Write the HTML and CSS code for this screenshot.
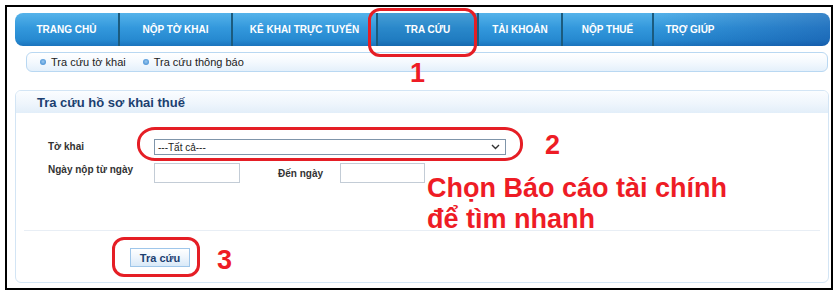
FILE: index.html
```html
<!DOCTYPE html>
<html lang="vi">
<head>
<meta charset="utf-8">
<title>Tra cứu hồ sơ khai thuế</title>
<link rel="stylesheet" href="styles.css">
</head>
<body>
<div class="page">
  <div class="frame">
    <nav class="topnav">
      <a class="tab tab-home">TRANG CHỦ</a>
      <a class="tab tab-submit">NỘP TỜ KHAI</a>
      <a class="tab tab-online">KÊ KHAI TRỰC TUYẾN</a>
      <a class="tab tab-search active">TRA CỨU</a>
      <a class="tab tab-account">TÀI KHOẢN</a>
      <a class="tab tab-tax">NỘP THUẾ</a>
      <a class="tab tab-help">TRỢ GIÚP</a>
    </nav>
    <div class="subnav">
      <span class="sublink"><i class="dot"></i>Tra cứu tờ khai</span>
      <span class="sublink"><i class="dot"></i>Tra cứu thông báo</span>
    </div>
    <section class="panel">
      <div class="panel-head"><h2 class="panel-title">Tra cứu hồ sơ khai thuế</h2></div>
      <div class="panel-body">
        <div class="row row-first">
          <label class="lbl">Tờ khai</label>
          <div class="select"><span class="select-text">---Tất cả---</span>
            <svg class="chev" width="9" height="6" viewBox="0 0 9 6"><path d="M1 1 L4.5 4.5 L8 1" fill="none" stroke="#333" stroke-width="1.4"/></svg>
          </div>
        </div>
        <div class="row row-second">
          <label class="lbl lbl-top">Ngày nộp từ ngày</label>
          <div class="input"></div>
          <label class="lbl lbl-to">Đến ngày</label>
          <div class="input input-to"></div>
        </div>
      </div>
      <div class="sep"></div>
      <div class="actions"><button class="btn">Tra cứu</button></div>
    </section>
  </div>

  <div class="oval oval-1"></div>
  <div class="oval oval-2"></div>
  <div class="oval oval-3"></div>
  <div class="num num-1">1</div>
  <div class="num num-2">2</div>
  <div class="num num-3">3</div>
  <div class="note">Chọn Báo cáo tài chính<br>để tìm nhanh</div>
</div>
</body>
</html>
```

FILE: styles.css
```css
html, body {
  margin: 0;
  padding: 0;
  background: #fff;
}
body {
  font-family: "Liberation Sans", Arial, sans-serif;
}
.page {
  position: relative;
  width: 836px;
  height: 293px;
  padding: 5px 0 0 5px;
  box-sizing: border-box;
  overflow: hidden;
}
.frame {
  width: 828px;
  height: 285px;
  box-sizing: border-box;
  border: 2px solid #000;
  padding: 6px 0 0 8px;
}

/* top navigation */
.topnav {
  display: flex;
  width: 815px;
  height: 33px;
  border-radius: 8px;
  overflow: hidden;
  background:
    linear-gradient(to right, rgba(10, 40, 130, 0) 78%, rgba(10, 50, 140, 0.35) 100%),
    linear-gradient(to bottom, #55b3ea 0%, #3398dc 45%, #2689d0 82%, #1b74bd 100%);
}
.tab {
  display: flex;
  align-items: center;
  justify-content: center;
  height: 100%;
  box-sizing: border-box;
  border-left: 2px solid #1b5b7e;
  color: #fff;
  font-size: 10px;
  font-weight: bold;
  white-space: nowrap;
}
.tab-home { width: 103px; border-left: none; }
.tab-submit { width: 113px; }
.tab-online { width: 145px; }
.tab-search { width: 101px; }
.tab-account { width: 84px; }
.tab-tax { width: 91px; }
.tab-help { width: 74px; }
.tab.active {
  background: rgba(0, 55, 110, 0.16);
}

/* sub navigation */
.subnav {
  display: flex;
  align-items: center;
  gap: 17px;
  margin: 6px 0 0 11px;
  width: 802px;
  height: 20px;
  box-sizing: border-box;
  padding-left: 13px;
  border: 1px solid #b9d8f2;
  border-radius: 6px;
  background: linear-gradient(to bottom, #ffffff 0%, #f4f9fe 50%, #e4f0fb 100%);
  font-size: 11px;
  color: #222;
}
.sublink {
  display: flex;
  align-items: center;
}
.dot {
  display: inline-block;
  width: 6px;
  height: 6px;
  border-radius: 50%;
  margin-right: 5px;
  background: radial-gradient(circle at 50% 45%, #9dc9ef 0%, #5d9fdc 55%, #3f86cc 100%);
}

/* panel */
.panel {
  margin-top: 18px;
  width: 814px;
  height: 193px;
  box-sizing: border-box;
  border: 1px solid #d3e5f5;
  border-radius: 6px;
}
.panel-head {
  height: 22px;
  display: flex;
  align-items: center;
  padding-left: 21px;
  border-radius: 5px 5px 0 0;
  background: linear-gradient(to bottom, #fbfdff 0%, #eef5fc 60%, #e2eef9 100%);
}
.panel-title {
  margin: 0;
  font-size: 13px;
  font-weight: bold;
  color: #1c3f70;
}
.panel-body {
  padding: 26px 0 0 32px;
}
.row {
  display: flex;
}
.row-first {
  align-items: center;
  height: 16px;
}
.row-second {
  margin-top: 8px;
  height: 20px;
}
.lbl {
  width: 106px;
  font-size: 10px;
  font-weight: bold;
  color: #333;
  line-height: 12px;
}
.lbl-top {
  align-self: flex-start;
  padding-top: 1px;
}
.lbl-to {
  width: 62px;
  margin-left: 38px;
  align-self: center;
  padding-top: 1px;
}
.select {
  display: flex;
  align-items: center;
  justify-content: space-between;
  width: 352px;
  height: 16px;
  box-sizing: border-box;
  border: 1px solid #7f95aa;
  padding: 0 5px 0 3px;
  background: #fff;
}
.select-text {
  font-size: 10px;
  color: #222;
}
.chev {
  display: block;
}
.input {
  width: 86px;
  height: 20px;
  box-sizing: border-box;
  border: 1px solid #c3ccd6;
  background: #fff;
}
.input-to {
  width: 85px;
}
.sep {
  margin: 47px 8px 0 8px;
  height: 1px;
  background: #e8eef5;
}
.actions {
  padding: 17px 0 0 114px;
}
.btn {
  display: block;
  width: 60px;
  height: 19px;
  padding: 0;
  border: 1px solid #9ec6ea;
  background: linear-gradient(to bottom, #ffffff 0%, #eef5fc 50%, #d9e9f8 100%);
  font-family: "Liberation Sans", Arial, sans-serif;
  font-size: 11px;
  font-weight: bold;
  color: #1c3f70;
}

/* annotations */
.oval {
  position: absolute;
  box-sizing: border-box;
  border: 3px solid #e51e25;
}
.oval-1 {
  left: 368px;
  top: 8px;
  width: 109px;
  height: 49px;
  border-radius: 12px;
}
.oval-2 {
  left: 137px;
  top: 127px;
  width: 386px;
  height: 34px;
  border-radius: 18px / 16px;
}
.oval-3 {
  left: 112px;
  top: 237px;
  width: 88px;
  height: 40px;
  border-radius: 12px;
}
.num {
  position: absolute;
  font-size: 27px;
  line-height: 27px;
  font-weight: bold;
  color: #ee1c25;
}
.num-1 { left: 410px; top: 60px; }
.num-2 { left: 545px; top: 132px; }
.num-3 { left: 217px; top: 247px; }
.note {
  position: absolute;
  left: 427px;
  top: 173px;
  font-size: 27px;
  line-height: 31px;
  font-weight: bold;
  color: #ee1c25;
  white-space: nowrap;
}
```
